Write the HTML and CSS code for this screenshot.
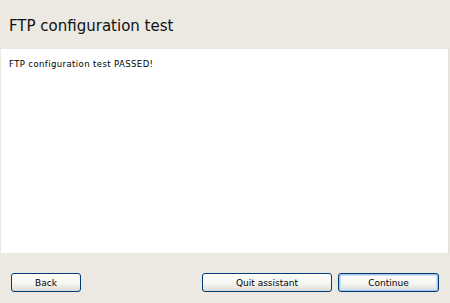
FILE: index.html
```html
<!DOCTYPE html>
<html>
<head>
<meta charset="utf-8">
<link rel="stylesheet" href="styles.css">
</head>
<body>
<div class="wizard">
  <header class="head">
    <h1 class="title">FTP configuration test</h1>
  </header>
  <main class="panel">
    <p class="msg">FTP configuration test PASSED!</p>
  </main>
  <footer class="foot">
    <button class="btn back">Back</button>
    <div class="right">
      <button class="btn quit">Quit assistant</button>
      <button class="btn cont default">Continue</button>
    </div>
  </footer>
</div>
</body>
</html>
```

FILE: styles.css
```css
html, body {
  margin: 0;
  padding: 0;
  background: #ece9e3;
}
.wizard {
  width: 450px;
  height: 303px;
  display: flex;
  flex-direction: column;
  background: #ece9e3;
}
.head {
  height: 49px;
  display: flex;
  align-items: center;
  padding-left: 9px;
  box-sizing: border-box;
}
.title {
  margin: 0;
  font-family: "DejaVu Sans", Verdana, sans-serif;
  font-size: 15px;
  font-weight: normal;
  color: #111;
  padding-top: 2px;
}
.panel {
  height: 204px;
  margin: 0 1px 0 1px;
  background: #fff;
  border-right: 1px solid #e0ded6;
  box-sizing: border-box;
  padding: 10px 8px;
}
.msg {
  margin: 0;
  font-family: "DejaVu Sans", Verdana, sans-serif;
  font-size: 8.5px;
  letter-spacing: 0.4px;
  color: #000;
}
.foot {
  flex: 1;
  display: flex;
  justify-content: space-between;
  align-items: flex-start;
  padding: 20px 11px 0 11px;
}
.right {
  display: flex;
  gap: 6px;
}
.btn {
  height: 19px;
  border: 1px solid #003c74;
  border-radius: 3px;
  background: linear-gradient(#ffffff, #f4f4f0 60%, #dcdad2);
  font-family: Tahoma, "DejaVu Sans", sans-serif;
  font-size: 9px;
  color: #000;
  padding: 0;
  box-sizing: border-box;
}
.back { width: 70px; }
.quit { width: 130px; }
.cont { width: 101px; }
.default {
  box-shadow: inset 0 0 0 1px #a8c4ee, inset 0 0 0 2px #cde0f8;
}
```
